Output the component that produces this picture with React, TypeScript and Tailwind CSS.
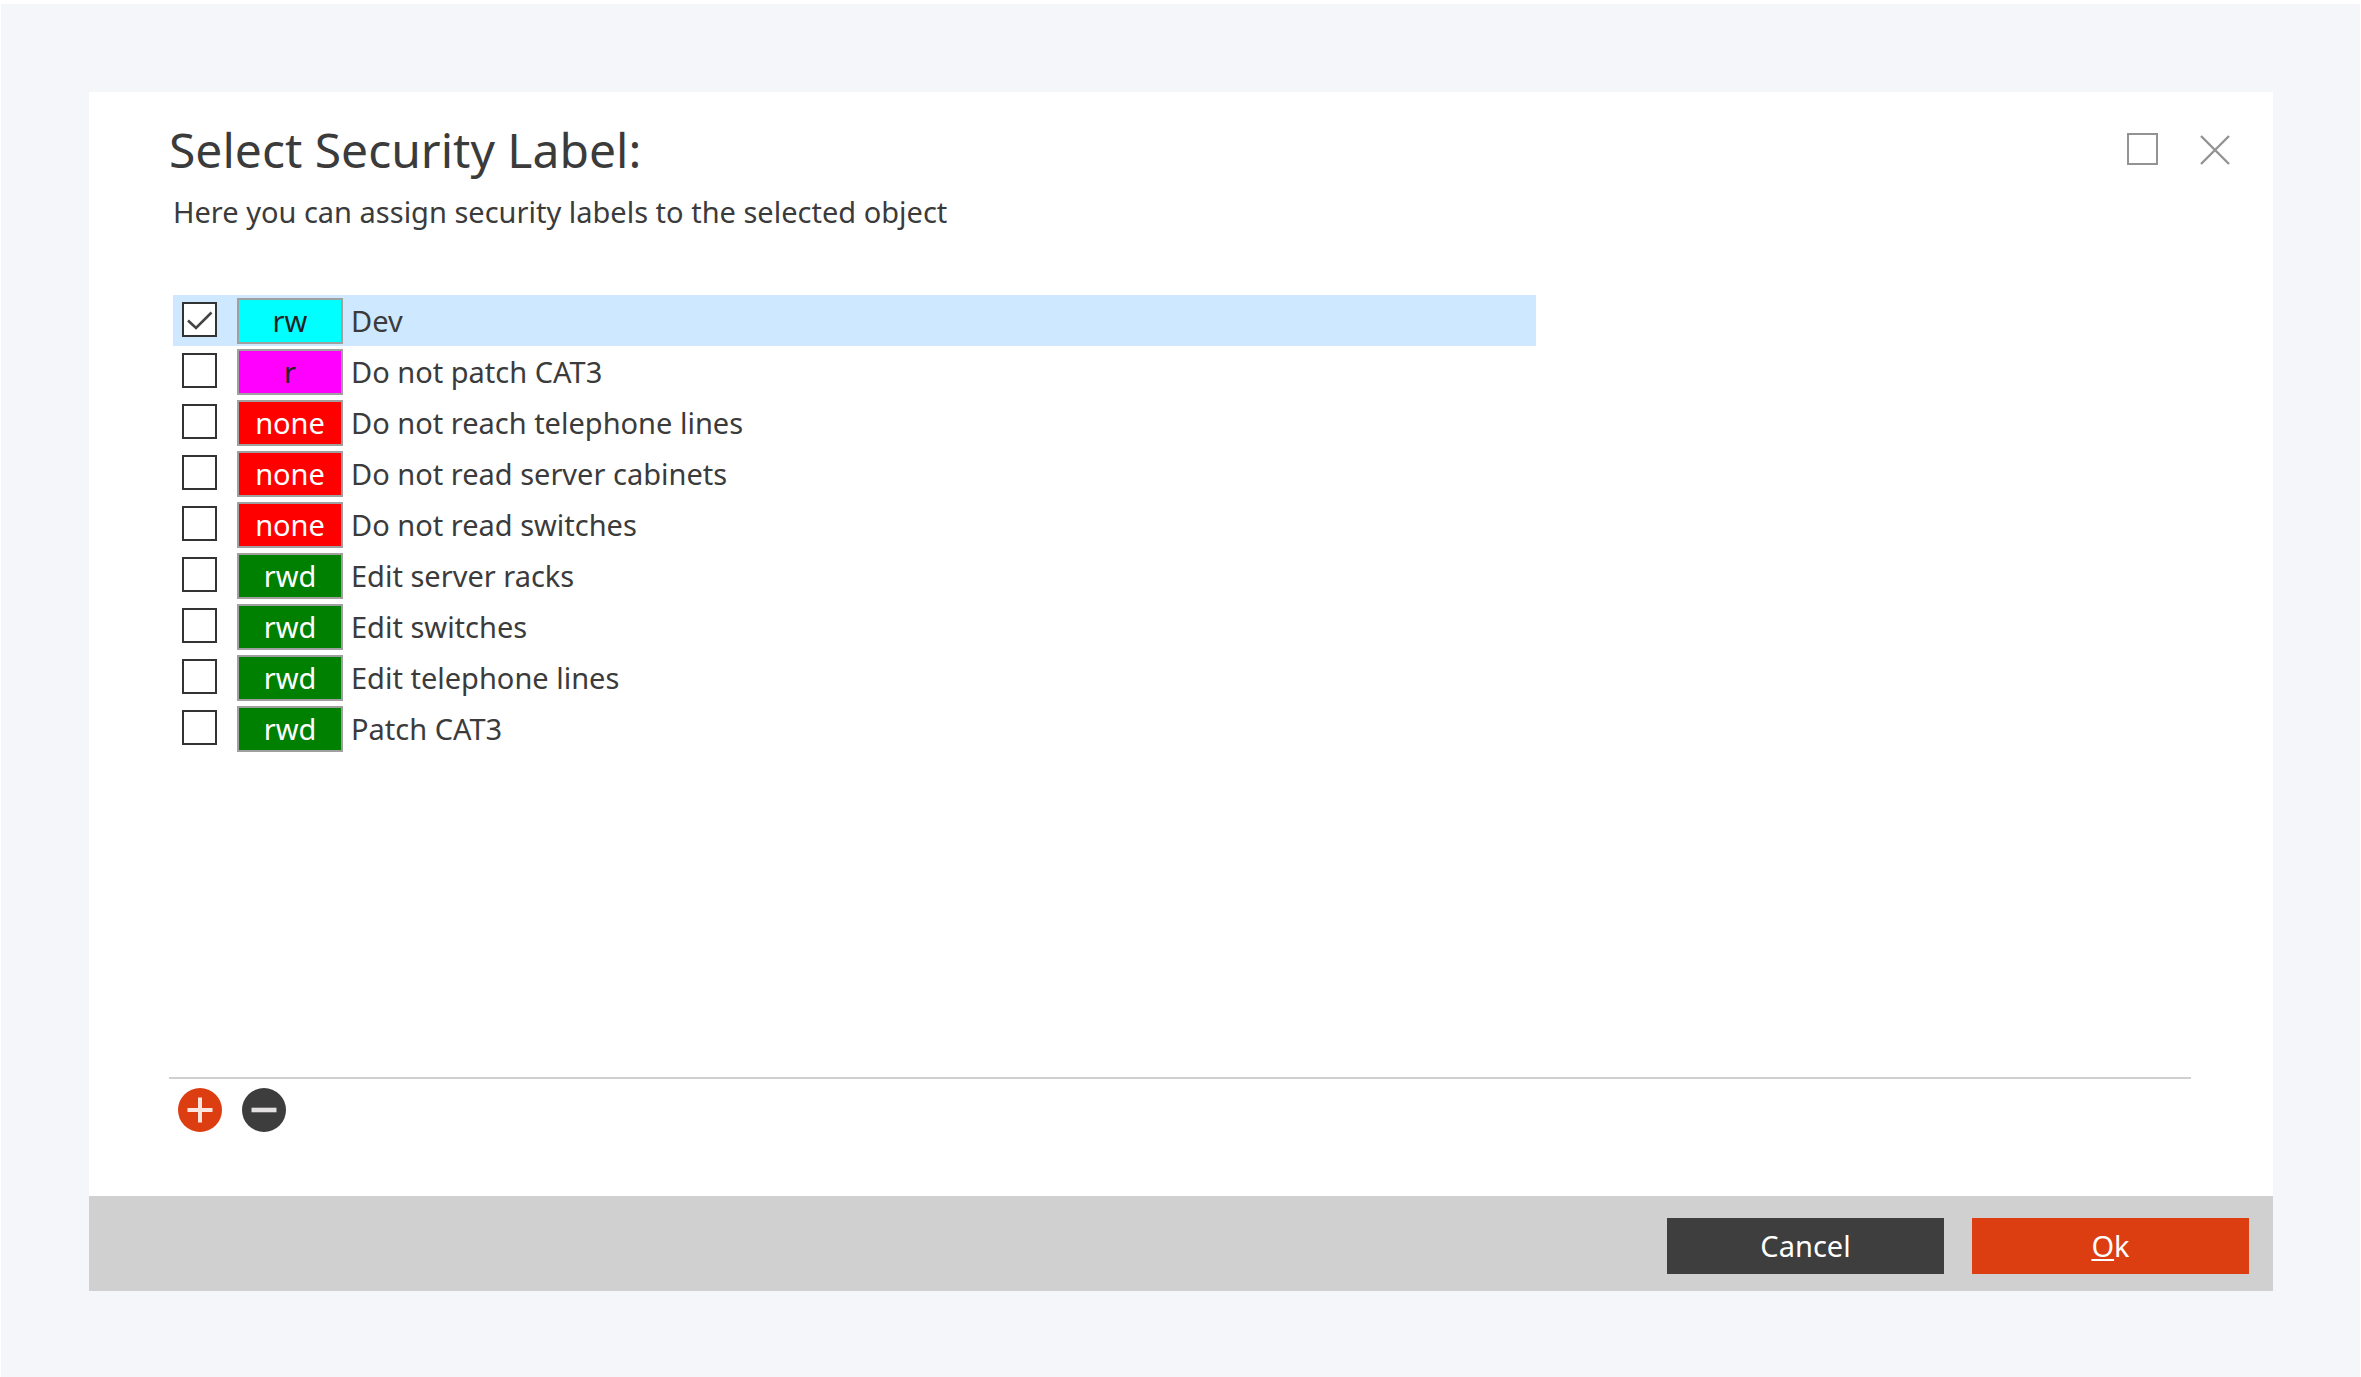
import { useState } from 'react'
import clsx from 'clsx'

interface SecurityLabel {
  id: number
  name: string
  rights: 'rw' | 'r' | 'none' | 'rwd'
}

const LABELS: SecurityLabel[] = [
  { id: 1, name: 'Dev', rights: 'rw' },
  { id: 2, name: 'Do not patch CAT3', rights: 'r' },
  { id: 3, name: 'Do not reach telephone lines', rights: 'none' },
  { id: 4, name: 'Do not read server cabinets', rights: 'none' },
  { id: 5, name: 'Do not read switches', rights: 'none' },
  { id: 6, name: 'Edit server racks', rights: 'rwd' },
  { id: 7, name: 'Edit switches', rights: 'rwd' },
  { id: 8, name: 'Edit telephone lines', rights: 'rwd' },
  { id: 9, name: 'Patch CAT3', rights: 'rwd' }
]

const RIGHTS_STYLES = {
  rw: 'bg-[#00ffff] text-[#222222]',
  r: 'bg-[#ff00ff] text-[#222222]',
  none: 'bg-[#ff0000] text-white',
  rwd: 'bg-[#008000] text-white'
}

interface LabelRowProps {
  label: SecurityLabel
  checked: boolean
  onToggle: () => void
}

function LabelRow({ label, checked, onToggle }: LabelRowProps) {
  return (
    <li>
      <label
        className={clsx(
          'flex h-[51px] items-center pl-[9px]',
          checked && 'bg-[#cde8ff]'
        )}
      >
        <span className="grid shrink-0 pb-[2px]">
          <input
            type="checkbox"
            checked={checked}
            onChange={onToggle}
            className="col-start-1 row-start-1 size-[35px] appearance-none border-2 border-[#333333] bg-white"
          />
          {checked && (
            <svg
              viewBox="0 0 35 35"
              className="pointer-events-none col-start-1 row-start-1 size-[35px]"
              fill="none"
              stroke="#444444"
              strokeWidth="2.6"
              aria-hidden="true"
            >
              <path d="M6 18.5 L14 26 L29.5 10.5" />
            </svg>
          )}
        </span>
        <span
          className={clsx(
            'ml-5 flex h-[46px] w-[106px] shrink-0 items-center justify-center border-2 border-[#a0a0a0]',
            RIGHTS_STYLES[label.rights]
          )}
        >
          {label.rights}
        </span>
        <span className="ml-2">{label.name}</span>
      </label>
    </li>
  )
}

export default function App() {
  const [selected, setSelected] = useState<number[]>([1])

  const toggle = (id: number) => {
    setSelected((prev) =>
      prev.includes(id) ? prev.filter((item) => item !== id) : [...prev, id]
    )
  }

  return (
    <div className="flex min-h-screen flex-col bg-white px-px pt-1 font-['Noto_Sans','Open_Sans',sans-serif] text-[29px] leading-9 text-[#3b3b3b]">
      <main className="flex flex-1 flex-col bg-[#f4f6fa] pt-[88px] pr-[87px] pb-[86px] pl-[88px]">
        <section
          role="dialog"
          aria-labelledby="dialog-title"
          className="flex flex-1 flex-col bg-white"
        >
          <div className="flex flex-1 flex-col pr-[82px] pb-16 pl-20">
            <header className="flex justify-between pt-7">
              <div>
                <h1 id="dialog-title" className="text-[48px] leading-[60px]">
                  Select Security Label:
                </h1>
                <p className="mt-[14px] pl-1">
                  Here you can assign security labels to the selected object
                </p>
              </div>
              {/* Window controls */}
              <div className="-mr-10 flex items-start gap-10 pt-[13px]">
                <button type="button" aria-label="Maximize">
                  <svg viewBox="0 0 32 32" className="size-8" fill="none" stroke="#939393" strokeWidth="2">
                    <rect x="1" y="1" width="29" height="30" />
                  </svg>
                </button>
                <button type="button" aria-label="Close">
                  <svg viewBox="0 0 32 32" className="size-8" fill="none" stroke="#939393" strokeWidth="2.4">
                    <path d="M2 3 L30 31 M30 3 L2 31" />
                  </svg>
                </button>
              </div>
            </header>

            <ul className="mt-[65px] ml-1 w-full max-w-[1363px] flex-1">
              {LABELS.map((label) => (
                <LabelRow
                  key={label.id}
                  label={label}
                  checked={selected.includes(label.id)}
                  onToggle={() => toggle(label.id)}
                />
              ))}
            </ul>

            {/* Add / remove labels */}
            <div className="flex gap-5 border-t-2 border-[#d0d0d0] pt-[9px] pl-[9px]">
              <button type="button" aria-label="Add label">
                <svg viewBox="0 0 44 44" className="size-11">
                  <circle cx="22" cy="22" r="22" fill="#dc3e12" />
                  <path d="M9.5 22 H34.5 M22 9.5 V34.5" stroke="#fbe6df" strokeWidth="4" fill="none" />
                </svg>
              </button>
              <button type="button" aria-label="Remove label">
                <svg viewBox="0 0 44 44" className="size-11">
                  <circle cx="22" cy="22" r="22" fill="#3d3d3d" />
                  <path d="M9.5 22 H34.5" stroke="#e2e0e0" strokeWidth="4.6" fill="none" />
                </svg>
              </button>
            </div>
          </div>

          <footer className="flex justify-end gap-7 bg-[#d0d0d0] px-6 pt-[22px] pb-[17px] text-white">
            <button type="button" className="h-14 w-[277px] bg-[#3e3e3e]">
              Cancel
            </button>
            <button type="button" className="h-14 w-[277px] bg-[#dc3e12]">
              <span className="underline decoration-2 underline-offset-2">O</span>k
            </button>
          </footer>
        </section>
      </main>
    </div>
  )
}
